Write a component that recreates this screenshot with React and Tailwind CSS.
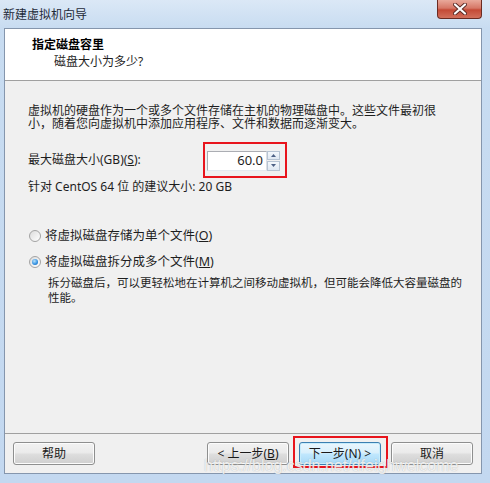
import React from 'react';

function CloseButton() {
    return (
        <div className="w-[45px] h-[19px] rounded-b-[4px] border border-t-0 border-[#6b2b22] bg-[linear-gradient(to_bottom,#e9a99b_0%,#d67766_45%,#c44a36_55%,#d2705c_100%)] flex items-center justify-center">
            <svg width="14" height="12" viewBox="0 0 14 12">
                <path d="M2 1.5 L12 10.5 M12 1.5 L2 10.5" stroke="#5a2a25" strokeWidth="4" strokeLinecap="round" />
                <path d="M2 1.5 L12 10.5 M12 1.5 L2 10.5" stroke="#ffffff" strokeWidth="2.2" strokeLinecap="round" />
            </svg>
        </div>
    );
}

function Spinner() {
    return (
        <div className="flex flex-col w-[13px] h-[20px] gap-[1px]">
            <div className="flex-1 border border-[#b7c4d3] bg-[linear-gradient(to_bottom,#f4f8fc,#dfe8f2)] flex items-center justify-center">
                <svg width="5" height="3" viewBox="0 0 5 3"><path d="M0 3 L2.5 0 L5 3 Z" fill="#4d6185" /></svg>
            </div>
            <div className="flex-1 border border-[#b7c4d3] bg-[linear-gradient(to_bottom,#f4f8fc,#dfe8f2)] flex items-center justify-center">
                <svg width="5" height="3" viewBox="0 0 5 3"><path d="M0 0 L2.5 3 L5 0 Z" fill="#4d6185" /></svg>
            </div>
        </div>
    );
}

function Radio({ checked, children }) {
    return (
        <div className="flex items-center h-[16px]">
            <div className="w-[12px] h-[12px] rounded-full border border-[#a3a3a3] bg-[linear-gradient(135deg,#dcdcdc,#ffffff)] flex items-center justify-center">
                {checked && (
                    <div className="w-[6px] h-[6px] rounded-full bg-[radial-gradient(circle_at_40%_35%,#b8e2fb,#2f8ee0_60%,#1a5fa8)]"></div>
                )}
            </div>
            <span className="ml-[4px] text-[12.5px] whitespace-nowrap">{children}</span>
        </div>
    );
}

function Button({ children, focused }) {
    const base = 'w-[82px] h-[23px] rounded-[3px] border flex items-center justify-center text-[12px] text-[#1a1a1a] ';
    const look = focused
        ? 'border-[#3c7fb1] bg-[linear-gradient(to_bottom,#eaf6fd_0%,#d9f0fc_45%,#bee6fd_55%,#a7d9f5_100%)] shadow-[inset_0_0_0_1px_#c6ecfc]'
        : 'border-[#8e8f8f] bg-[linear-gradient(to_bottom,#f2f2f2_0%,#ebebeb_45%,#dddddd_55%,#cfcfcf_100%)] shadow-[inset_0_0_0_1px_#fcfcfc]';
    return <div className={base + look}>{children}</div>;
}

export default function App() {
    return (
        <div className="relative w-[490px] h-[483px] bg-[linear-gradient(to_bottom,#dbe8f6_0px,#c8dcf1_28px,#c3d8f0_100%)] flex flex-col font-['Noto_Sans','Noto_Sans_CJK_SC',sans-serif] text-[#1e1e1e] overflow-hidden">
            {/* title bar */}
            <div className="h-[28px] flex items-start justify-between pl-[3px] pr-[8px]">
                <span className="text-[12px] leading-[16px] mt-[7px] text-[#1f2a38]">新建虚拟机向导</span>
                <CloseButton />
            </div>

            {/* client area */}
            <div className="ml-[4px] w-[478px] h-[446px] border border-[#8596ad] flex flex-col bg-[#f0f0f0]">
                {/* header */}
                <div className="h-[52px] bg-white border-b border-[#a0a0a0] pl-[27px] pt-[7px]">
                    <div className="text-[12px] leading-[17px] font-bold text-black">指定磁盘容里</div>
                    <div className="text-[12px] leading-[17px] pl-[22px]">磁盘大小为多少?</div>
                </div>

                {/* body */}
                <div className="flex-1 pl-[23px] pt-[23px] text-[12px]">
                    <div className="leading-[13px] whitespace-nowrap">
                        <div>虚拟机的硬盘作为一个或多个文件存储在主机的物理磁盘中。这些文件最初很</div>
                        <div>小，随着您向虚拟机中添加应用程序、文件和数据而逐渐变大。</div>
                    </div>

                    <div className="flex items-center mt-[12px] h-[36px]">
                        <span className="w-[175px] whitespace-nowrap">最大磁盘大小(GB)(<span className="underline">S</span>):</span>
                        <div className="w-[84px] h-[36px] border-2 border-[#e8141c] flex items-center pl-[2px] pt-[1px]">
                            <div className="w-[60px] h-[20px] bg-white border border-[#abadb3] border-r-[#dbdfe6] border-b-[#e3e9ef] flex items-center justify-end pr-[3px] text-[13px]">60.0</div>
                            <Spinner />
                        </div>
                    </div>

                    <div className="leading-[14px] mt-[2px] whitespace-nowrap">针对 CentOS 64 位 的建议大小: 20 GB</div>

                    <div className="flex flex-col gap-[10px] mt-[34px] pl-[1px]">
                        <Radio>将虚拟磁盘存储为单个文件(<span className="underline">O</span>)</Radio>
                        <Radio checked>将虚拟磁盘拆分成多个文件(<span className="underline">M</span>)</Radio>
                    </div>

                    <div className="pl-[20px] mt-[5px] text-[11.5px] leading-[15px] whitespace-nowrap">
                        <div>拆分磁盘后，可以更轻松地在计算机之间移动虚拟机，但可能会降低大容量磁盘的</div>
                        <div>性能。</div>
                    </div>
                </div>

                {/* footer */}
                <div className="h-[40px] border-t border-[#a0a0a0] flex items-start justify-between px-[8px] pt-[8px]">
                    <Button>帮助</Button>
                    <div className="flex gap-[10px]">
                        <Button>&lt; 上一步(<span className="underline">B</span>)</Button>
                        <div className="relative">
                            <Button focused>下一步(N) &gt;</Button>
                            <div className="absolute -left-[6px] -right-[7px] -top-[6px] -bottom-[3px] border-2 border-[#e8141c] pointer-events-none"></div>
                        </div>
                        <Button>取消</Button>
                    </div>
                </div>
            </div>

            {/* watermark */}
            <div className="absolute left-[204px] top-[454px] text-[16px] font-['Liberation_Sans',sans-serif] text-white/80 [text-shadow:0_0_1px_rgba(120,120,120,0.6)] pointer-events-none whitespace-nowrap">
                https://blog.csdn.net/dfeighwelcome
            </div>
        </div>
    );
}
